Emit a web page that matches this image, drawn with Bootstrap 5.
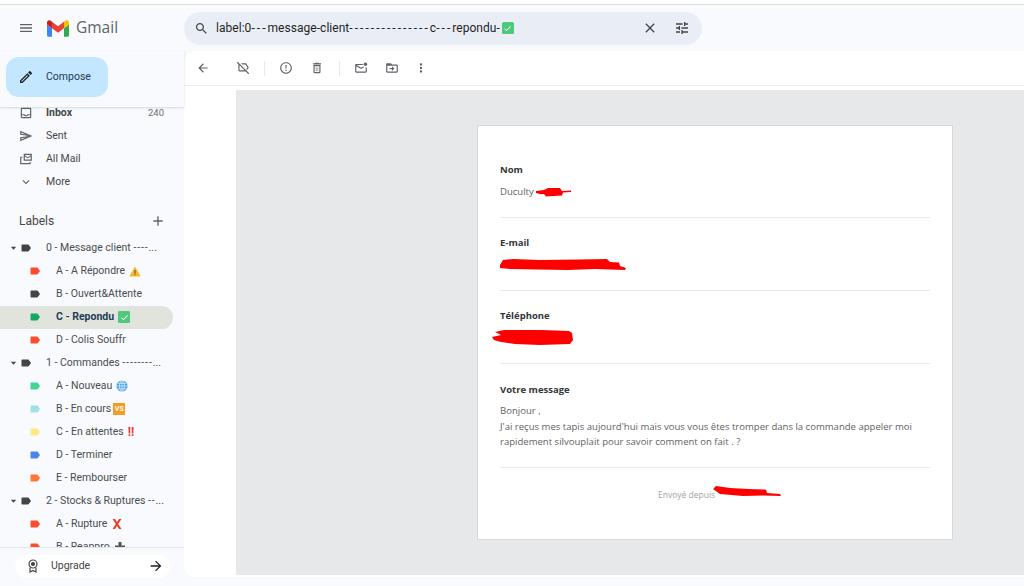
<!doctype html>
<html lang="fr">
<head>
<meta charset="utf-8">
<title>Gmail</title>
<link href="https://cdn.jsdelivr.net/npm/bootstrap@5.3.0/dist/css/bootstrap.min.css" rel="stylesheet">
<style>
html,body{height:586px;overflow:hidden}
body{background:#f8fafd;font-family:Roboto,"Liberation Sans",sans-serif;font-size:10.5px;color:#444746}
svg{display:block;flex:none;fill:currentColor}
.topstrip{height:5px;background:#fff;border-bottom:1px solid #dadce0}
.headbar{height:46px}
.brand{width:184px;padding-left:18px}
.brand-word{font-size:15.500px;color:#5f6368;margin-left:7px;font-family:"Open Sans",Roboto,sans-serif}
.searchpill{width:518px;height:33px;background:#e9eef6;border-radius:17px;padding:0 12px 0 10px;font-size:12px;color:#1f1f1f}
.qtext{margin-left:7px;white-space:pre;letter-spacing:.04px}
.dashes{letter-spacing:2.05px}
.ebox{width:12px;height:12px;background:#4dc97a;border-radius:1.5px;color:#fff;margin-left:2px}
.bodyrow{height:535px}
.sidebar{width:184px}
.composezone{height:57px;background:#f8fafd;box-shadow:0 1px 2px rgba(60,64,67,.18);position:relative;z-index:2;padding:6px 0 0 6px}
.composebtn{width:102px;height:40px;background:#c2e7ff;border-radius:13px;color:#1f3b57;font-size:10.5px;padding:0 0 0 12px;border:0}
.composebtn span{margin-left:12px}
.sidescroll{margin-top:-5px;overflow:hidden}
.srow{height:23px;padding-left:19px;color:#444746;white-space:nowrap}
.srow .ico{width:14px;margin-right:13px;color:#5f6368}
.cnt{margin-left:auto;margin-right:20px;font-size:9.5px;color:#6b6f72}
.lblhead{height:24px;margin:15px 0 4px;padding:0 18px 0 19px;font-size:12px;color:#444746}
.lrow{height:23px;white-space:nowrap;padding-left:10px;color:#4a4d50;width:173px;border-radius:0 12px 12px 0}
.lrow .caret-d{width:7px;margin-right:3px;color:#444746}
.lrow.kid{padding-left:29px}
.lrow .tag{width:12px;height:12px;margin-right:14px}
.lrow.kid .tag{margin-right:15px}
.lrow.sel{background:#e1e4dd;font-weight:700;color:#1f3b57}
.ldash{letter-spacing:.9px}
.vsbox{display:inline-block;font-style:normal;width:12px;height:12px;line-height:12px;text-align:center;background:#f59a23;color:#fff;font-size:7px;font-weight:700;margin-left:2px}
.bang{color:#e53935;font-weight:700;font-size:12px;line-height:1;margin-left:4px}
.upgradebar{height:40px;border-top:1px solid #e3e5e8;background:#f8fafd;position:relative;z-index:2;padding:7px 0 0 15px}
.upgradepill{width:155px;height:23px;background:#fff;border-radius:12px;padding:0 6px 0 12px;color:#444746;font-size:10.5px}
.upgradepill span{margin-left:12px}
.mainpanel{height:526px;background:#fff;border-radius:12px 0 0 12px;overflow:hidden}
.toolbar{height:35px;padding-left:12px;color:#5f6368;border-bottom:1px solid #eceef0}
.vsep{width:1px;height:15px;background:#e6e8ea}
.m26{margin-left:26px}.m14{margin-left:14px}.m15{margin-left:15px}.m17{margin-left:17px}
.greyzone{margin:4px 0 2px 52px;height:485px;background:#e7e8ea;padding:35px 0 0 241px}
.mailcard{width:476px;height:415px;background:#fff;border:1px solid #d6d7d9;padding:35px 22px 0;font-family:"Open Sans","Noto Sans",sans-serif;font-size:9.55px;color:#5f6265}
.field{padding-bottom:16px;margin-bottom:16px;border-bottom:1px solid #e8e9ea}
.fname{font-weight:700;color:#33363a;line-height:18px;margin-bottom:4px;font-size:9.500px}
.fval{line-height:18px;height:18px;position:relative}
.scrib{position:absolute;fill:#f00}
.msgtext{line-height:15.7px;margin-top:4px}
.fieldmsg{padding-top:1px;padding-bottom:17px;margin-bottom:18px;border-bottom:1px solid #e8e9ea}
.foot{font-size:8.5px;color:#a0a3a6;line-height:18px;padding-left:158px;position:relative}
</style>
</head>
<body>
<div class="topstrip"></div>
<div class="headbar d-flex align-items-center">
  <div class="brand d-flex align-items-center">
    <svg width="16" height="16" viewBox="0 0 24 24" style="color:#5f6368;margin-right:13px"><path d="M3 18h18v-2H3v2zm0-5h18v-2H3v2zm0-7v2h18V6H3z"/></svg>
    <svg width="22" height="17" viewBox="52 42 88 66"><path fill="#4285f4" d="M58 108h14V74L52 59v43c0 3.32 2.69 6 6 6"/><path fill="#34a853" d="M120 108h14c3.32 0 6-2.69 6-6V59l-20 15"/><path fill="#fbbc04" d="M120 48v26l20-15v-8c0-7.42-8.47-11.65-14.4-7.2"/><path fill="#ea4335" d="M72 74V48l24 18 24-18v26L96 92"/><path fill="#c5221f" d="M52 51v8l20 15V48l-5.6-4.2c-5.94-4.45-14.4-.22-14.4 7.2"/></svg>
    <span class="brand-word">Gmail</span>
  </div>
  <div class="searchpill d-flex align-items-center">
    <svg width="15" height="15" viewBox="0 0 24 24" style="color:#444746"><path d="M15.5 14h-.79l-.28-.27C15.41 12.59 16 11.11 16 9.5 16 5.91 13.09 3 9.5 3S3 5.91 3 9.5 5.91 16 9.5 16c1.61 0 3.09-.59 4.23-1.57l.27.28v.79l5 4.99L20.49 19l-4.99-5zm-6 0C7.01 14 5 11.99 5 9.5S7.01 5 9.5 5 14 7.01 14 9.5 11.99 14 9.5 14z"/></svg>
    <span class="qtext">label:0<span class="dashes">---</span>message-client<span class="dashes">---------------</span>c<span class="dashes">---</span>repondu-</span>
    <span class="ebox d-flex align-items-center justify-content-center"><svg width="9" height="9" viewBox="0 0 24 24"><path d="M9 16.2 4.8 12l-1.4 1.4L9 19 21 7l-1.4-1.4z"/></svg></span>
    <svg class="ms-auto" width="16" height="16" viewBox="0 0 24 24" style="color:#444746"><path d="M19 6.41L17.59 5 12 10.59 6.41 5 5 6.41 10.59 12 5 17.59 6.41 19 12 13.41 17.59 19 19 17.59 13.41 12z"/></svg>
    <svg width="16" height="16" viewBox="0 0 24 24" style="color:#444746;margin-left:16px"><path d="M3 17v2h6v-2H3zM3 5v2h10V5H3zm10 16v-2h8v-2h-8v-2h-2v6h2zM7 9v2H3v2h4v2h2V9H7zm14 4v-2H11v2h10zm-6-4h2V7h4V5h-4V3h-2v6z"/></svg>
  </div>
</div>
<div class="bodyrow d-flex">
  <aside class="sidebar d-flex flex-column">
    <div class="composezone">
      <button class="composebtn d-flex align-items-center" type="button">
        <svg width="16" height="16" viewBox="0 0 24 24" style="color:#1f1f1f"><path d="M14.06 9.02l.92.92L5.92 19H5v-.92l9.06-9.06M17.66 3c-.25 0-.51.1-.7.29l-1.83 1.83 3.75 3.75 1.83-1.83c.39-.39.39-1.02 0-1.41l-2.34-2.34c-.2-.2-.45-.29-.71-.29zm-3.6 3.19L3 17.25V21h3.75L17.81 9.94l-3.75-3.75z"/></svg>
        <span>Compose</span>
      </button>
    </div>
    <div class="sidescroll flex-grow-1">
      <div class="srow d-flex align-items-center fw-bold"><svg class="ico" width="14" height="14" viewBox="0 0 24 24"><path d="M19 3H5c-1.1 0-2 .9-2 2v14c0 1.1.9 2 2 2h14c1.1 0 2-.9 2-2V5c0-1.1-.9-2-2-2zm0 16H5v-3h3.56c.69 1.19 1.97 2 3.45 2s2.75-.81 3.45-2H19v3zm0-5h-4.99c0 1.1-.9 2-2 2s-2-.9-2-2H5V5h14v9z"/></svg><span>Inbox</span><span class="cnt fw-normal">240</span></div>
      <div class="srow d-flex align-items-center"><svg class="ico" width="14" height="14" viewBox="0 0 24 24"><path d="M4.01 6.03l7.51 3.22-7.52-1 .01-2.22m7.5 8.72L4 17.97v-2.22l7.51-1M2.01 3L2 10l15 2-15 2 .01 7L23 12 2.01 3z"/></svg><span>Sent</span></div>
      <div class="srow d-flex align-items-center"><svg class="ico" width="14" height="14" viewBox="0 0 24 24"><path d="M8 3h14v12H8zm2 2v.6l5 3.2 5-3.2V5zm10 2.6-5 3.2-5-3.2V13h10zM2 8h4v2H4v9h14v-2h2v4H2z"/></svg><span>All Mail</span></div>
      <div class="srow d-flex align-items-center"><svg class="ico" width="14" height="14" viewBox="0 0 24 24"><path d="M16.59 8.59L12 13.17 7.41 8.59 6 10l6 6 6-6z"/></svg><span>More</span></div>
      <div class="lblhead d-flex align-items-center justify-content-between"><span>Labels</span><svg width="16" height="16" viewBox="0 0 24 24" style="color:#5f6368"><path d="M19 13h-6v6h-2v-6H5v-2h6V5h2v6h6v2z"/></svg></div>

      <svg width="0" height="0" class="position-absolute"><defs><path id="tagp" d="M17.63 5.84C17.27 5.33 16.67 5 16 5L5 5.01C3.9 5.01 3 5.9 3 7v10c0 1.1.9 1.99 2 1.99L16 19c.67 0 1.27-.33 1.63-.84L22 12l-4.37-6.16z"/><path id="carp" d="M2 4h12l-6 7z"/></defs></svg>

      <div class="lrow d-flex align-items-center"><svg class="caret-d" width="7" height="7" viewBox="0 0 16 16"><use href="#carp"/></svg><svg class="tag" viewBox="0 0 24 24" style="color:#444"><use href="#tagp"/></svg><span>0 - Message client <span class="ldash">----</span>...</span></div>
      <div class="lrow kid d-flex align-items-center"><svg class="tag" viewBox="0 0 24 24" style="color:#fb4c2f"><use href="#tagp"/></svg><span>A - A Répondre</span><svg class="ms-1" width="12" height="11" viewBox="0 0 24 22"><path fill="#f7b731" d="M12 1 23.5 21H.5z"/><path fill="#5a4a20" d="M11 8h2v7h-2zm0 8.5h2v2h-2z"/></svg></div>
      <div class="lrow kid d-flex align-items-center"><svg class="tag" viewBox="0 0 24 24" style="color:#444"><use href="#tagp"/></svg><span>B - Ouvert&amp;Attente</span></div>
      <div class="lrow kid sel d-flex align-items-center"><svg class="tag" viewBox="0 0 24 24" style="color:#16a765"><use href="#tagp"/></svg><span>C - Repondu</span><span class="ebox d-flex align-items-center justify-content-center ms-1"><svg width="9" height="9" viewBox="0 0 24 24"><path d="M9 16.2 4.8 12l-1.4 1.4L9 19 21 7l-1.4-1.4z"/></svg></span></div>
      <div class="lrow kid d-flex align-items-center"><svg class="tag" viewBox="0 0 24 24" style="color:#fb4c2f"><use href="#tagp"/></svg><span>D - Colis Souffr</span></div>
      <div class="lrow d-flex align-items-center"><svg class="caret-d" width="7" height="7" viewBox="0 0 16 16"><use href="#carp"/></svg><svg class="tag" viewBox="0 0 24 24" style="color:#444"><use href="#tagp"/></svg><span>1 - Commandes <span class="ldash">--------</span>...</span></div>
      <div class="lrow kid d-flex align-items-center"><svg class="tag" viewBox="0 0 24 24" style="color:#43d692"><use href="#tagp"/></svg><span>A - Nouveau</span><svg class="ms-1" width="12" height="12" viewBox="0 0 24 24"><circle cx="12" cy="12" r="11" fill="#3d9be9"/><g fill="none" stroke="#dff0fc" stroke-width="1.6"><ellipse cx="12" cy="12" rx="5" ry="11"/><path d="M1 12h22M3 6.5h18M3 17.5h18M12 1v22"/></g></svg></div>
      <div class="lrow kid d-flex align-items-center"><svg class="tag" viewBox="0 0 24 24" style="color:#9fe1e7"><use href="#tagp"/></svg><span>B - En cours</span><i class="vsbox">VS</i></div>
      <div class="lrow kid d-flex align-items-center"><svg class="tag" viewBox="0 0 24 24" style="color:#fbe983"><use href="#tagp"/></svg><span>C - En attentes</span><span class="bang">!!</span></div>
      <div class="lrow kid d-flex align-items-center"><svg class="tag" viewBox="0 0 24 24" style="color:#4986e7"><use href="#tagp"/></svg><span>D - Terminer</span></div>
      <div class="lrow kid d-flex align-items-center"><svg class="tag" viewBox="0 0 24 24" style="color:#ff7537"><use href="#tagp"/></svg><span>E - Rembourser</span></div>
      <div class="lrow d-flex align-items-center"><svg class="caret-d" width="7" height="7" viewBox="0 0 16 16"><use href="#carp"/></svg><svg class="tag" viewBox="0 0 24 24" style="color:#444"><use href="#tagp"/></svg><span>2 - Stocks &amp; Ruptures <span class="ldash">--</span>...</span></div>
      <div class="lrow kid d-flex align-items-center"><svg class="tag" viewBox="0 0 24 24" style="color:#fb4c2f"><use href="#tagp"/></svg><span>A - Rupture</span><svg class="ms-1" width="12" height="12" viewBox="0 0 24 24"><path fill="#e8412f" d="M3 2h5l4 6 4-6h5l-6.500 10L21 22h-5l-4-6-4 6H3l6.500-10z"/></svg></div>
      <div class="lrow kid d-flex align-items-center"><svg class="tag" viewBox="0 0 24 24" style="color:#fb4c2f"><use href="#tagp"/></svg><span>B - Reappro</span><svg class="ms-1" width="12" height="12" viewBox="0 0 24 24"><path fill="#555" d="M9 2h6v7h7v6h-7v7H9v-7H2V9h7z"/></svg></div>
    </div>
    <div class="upgradebar">
      <div class="upgradepill d-flex align-items-center">
        <svg width="12" height="14" viewBox="0 0 24 28" fill="none" style="fill:none;stroke:#444746;stroke-width:2.4"><circle cx="12" cy="10" r="8"/><circle cx="12" cy="10" r="3" style="fill:#444746"/><path d="M6 17v9l6-3 6 3v-9"/></svg>
        <span>Upgrade</span>
        <svg class="ms-auto" width="16" height="16" viewBox="0 0 24 24" style="color:#1f1f1f"><path d="M12 4l-1.41 1.41L16.17 11H4v2h12.17l-5.58 5.59L12 20l8-8z"/></svg>
      </div>
    </div>
  </aside>
  <main class="mainpanel flex-grow-1">
    <div class="toolbar d-flex align-items-center">
      <svg width="14" height="14" viewBox="0 0 24 24"><path d="M20 11H7.83l5.59-5.59L12 4l-8 8 8 8 1.41-1.41L7.83 13H20v-2z"/></svg>
      <svg class="m26" width="14" height="14" viewBox="0 0 24 24"><path d="M2.8 1.4 1.4 2.8 4 5.4V16c0 1.1.9 2 2 2h10.6l4.6 4.6 1.4-1.4zM6 16V7.4L14.6 16zM16 6l3.5 5-2.1 3 1.4 1.4L22 11l-5-7H8.600l2 2z"/></svg>
      <span class="vsep m14"></span>
      <svg class="m14" width="14" height="14" viewBox="0 0 24 24"><path d="M11 15h2v2h-2zm0-8h2v6h-2zm.99-5C6.47 2 2 6.48 2 12s4.47 10 9.99 10C17.52 22 22 17.52 22 12S17.52 2 11.99 2zM12 20c-4.42 0-8-3.58-8-8s3.58-8 8-8 8 3.58 8 8-3.58 8-8 8z"/></svg>
      <svg class="m17" width="14" height="14" viewBox="0 0 24 24"><path d="M6 19c0 1.100.9 2 2 2h8c1.100 0 2-.9 2-2V7H6v12zM8 9h8v10H8V9zm7.500-5l-1-1h-5l-1 1H5v2h14V4zM10 10.500h1v7h-1zM13 10.500h1v7h-1z"/></svg>
      <span class="vsep m15"></span>
      <svg class="m14" width="14" height="14" viewBox="0 0 24 24"><path d="M4 5h11v2H4.800L12 11.500 16 9l1 1.700-5 3.100L4 8.800V18h16v-7h2v7c0 1.100-.9 2-2 2H4c-1.100 0-2-.9-2-2V7c0-1.100.9-2 2-2z"/><circle cx="19.500" cy="5.500" r="3"/></svg>
      <svg class="m17" width="14" height="14" viewBox="0 0 24 24"><path d="M20 6h-8l-2-2H4c-1.100 0-2 .9-2 2v12c0 1.100.9 2 2 2h16c1.100 0 2-.9 2-2V8c0-1.100-.9-2-2-2zM4 18V8h16v10zm8-1 4-4-4-4v3H8v2h4z"/></svg>
      <svg class="m15" width="14" height="14" viewBox="0 0 24 24"><path d="M12 8c1.100 0 2-.9 2-2s-.9-2-2-2-2 .9-2 2 .9 2 2 2zm0 2c-1.100 0-2 .9-2 2s.9 2 2 2 2-.9 2-2-.9-2-2-2zm0 6c-1.100 0-2 .9-2 2s.9 2 2 2 2-.9 2-2-.9-2-2-2z"/></svg>
    </div>
    <div class="greyzone">
      <div class="mailcard">
        <div class="field">
          <div class="fname">Nom</div>
          <div class="fval">Duculty
            <svg class="scrib" style="left:36px;top:2px" width="36" height="14" viewBox="0 0 36 14"><path d="M0 6 8 5l4-2 12 0 2 3 9-.500 0 1.500-8 .500-1 3-16 1-2-2.500-3 .200L0 8z"/></svg>
          </div>
        </div>
        <div class="field">
          <div class="fname">E-mail</div>
          <div class="fval">
            <svg class="scrib" style="left:0;top:1px" width="126" height="16" viewBox="0 0 126 16"><path d="M0 8 3 3 14 2l25 1 40-.500 28-.500 3 3 9 .500 1 3.500 6 2-1 2-30-1-27 1-30-.500-28-.500-10-1z"/></svg>
          </div>
        </div>
        <div class="field">
          <div class="fname">Téléphone</div>
          <div class="fval">
            <svg class="scrib" style="left:-8px;top:0" width="82" height="17" viewBox="0 0 82 17"><path d="M3 3 12 1h38l27 1 3 2 1 7-3 4-30 1-25-1-14-2-7-2L0 8l9-2z"/></svg>
          </div>
        </div>
        <div class="fieldmsg">
          <div class="fname">Votre message</div>
          <div class="msgtext">Bonjour ,<br>J'ai reçus mes tapis aujourd'hui mais vous vous êtes tromper dans la commande appeler moi<br>rapidement silvouplait pour savoir comment on fait . ?</div>
        </div>
        <div class="foot">Envoyé depuis
          <svg class="scrib" style="left:213px;top:0" width="68" height="13" viewBox="0 0 68 13"><path d="M0 3 3 0l14 2 18 1 18 .500 1 3.500 13 1 1 2-18-.500-20 .500L7 8z"/></svg>
        </div>
      </div>
    </div>
  </main>
</div>
<script src="https://cdn.jsdelivr.net/npm/bootstrap@5.3.0/dist/js/bootstrap.bundle.min.js"></script>
</body>
</html>
